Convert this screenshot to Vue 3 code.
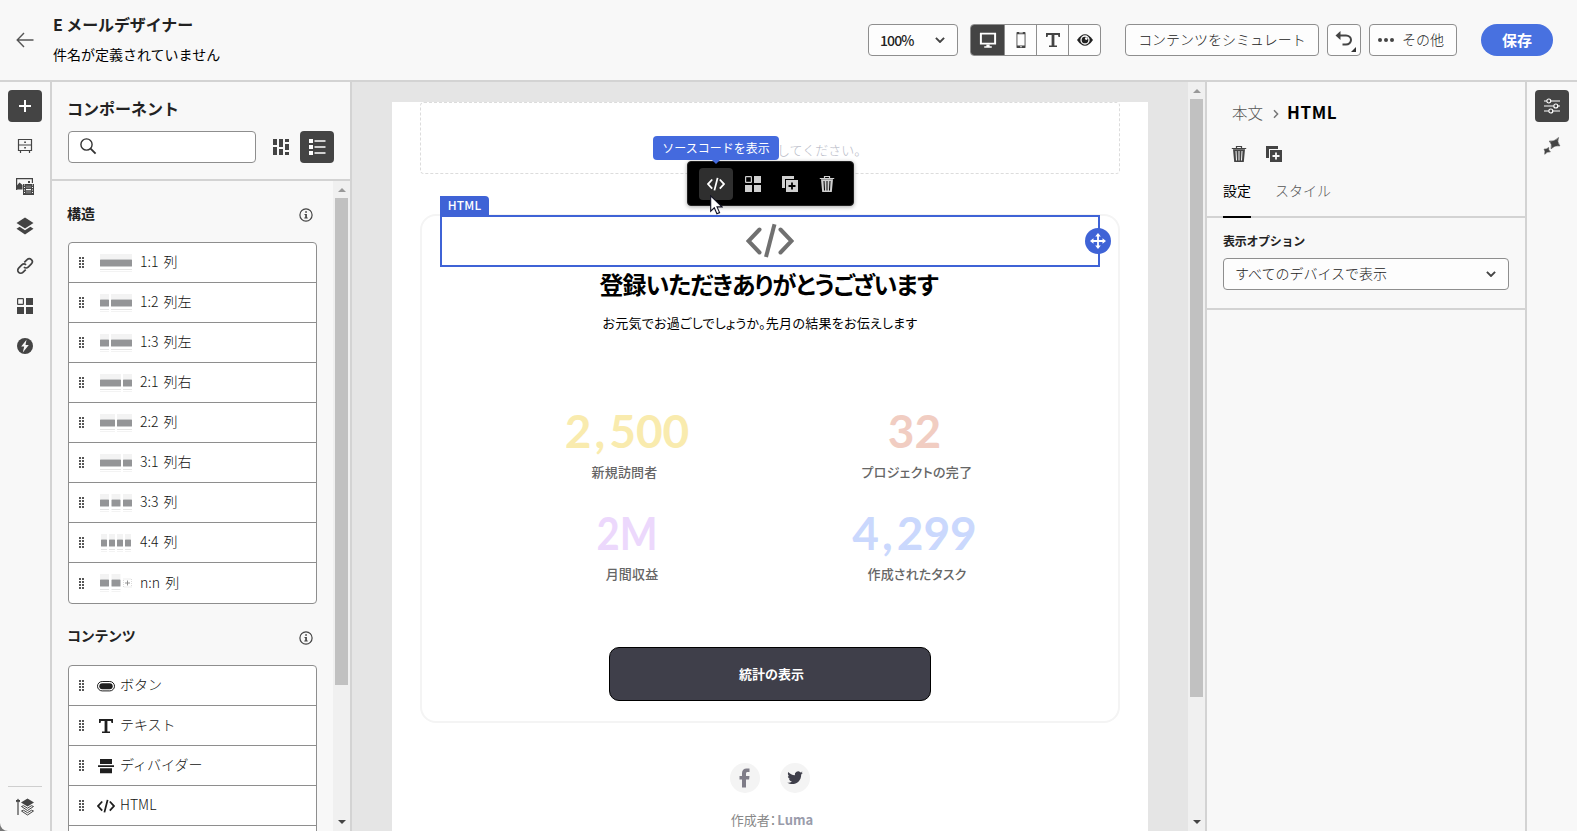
<script setup>
const structures = [
  { label: '1:1 列', bars: [[0, 32]] },
  { label: '1:2 列左', bars: [[0, 9], [11, 21]] },
  { label: '1:3 列左', bars: [[0, 9], [11, 21]] },
  { label: '2:1 列右', bars: [[0, 21], [23, 9]] },
  { label: '2:2 列', bars: [[0, 15], [17, 15]] },
  { label: '3:1 列右', bars: [[0, 21], [23, 9]] },
  { label: '3:3 列', bars: [[0, 9], [11.5, 9], [23, 9]] },
  { label: '4:4 列', bars: [[1, 6], [9, 6], [17, 6], [25, 6]] },
  { label: 'n:n 列', bars: [[0, 9], [11.5, 9]], plus: true },
]
const contents = [
  { label: 'ボタン', icon: 'i-button' },
  { label: 'テキスト', icon: 'i-text' },
  { label: 'ディバイダー', icon: 'i-divider' },
  { label: 'HTML', icon: 'i-code' },
  { label: '', icon: '' },
]
const rail = ['i-cabinet', 'i-media', 'i-layers', 'i-link', 'i-grid', 'i-bolt']
const stats = [
  { head: '2', tail: '500', label: '新規訪問者', cls: 's1' },
  { head: '32', tail: '', label: 'プロジェクトの完了', cls: 's2' },
  { head: '2M', tail: '', label: '月間収益', cls: 's3' },
  { head: '4', tail: '299', label: '作成されたタスク', cls: 's4' },
]
</script>

<template>
  <div class="app">
    <svg class="defs" width="0" height="0">
      <symbol id="i-cabinet" viewBox="0 0 18 18">
        <path d="M2.5 2.5h13v11h-13zM2.5 8h13M4.5 14v2M13.500 14v2" fill="none" stroke="currentColor" stroke-width="1.2" />
        <path d="M8.200 4.500h1.700v1.600h-1.700zM8.200 10h1.700v1.600h-1.700z" fill="currentColor" />
      </symbol>
      <symbol id="i-media" viewBox="0 0 18 18">
        <path d="M.6 13V1.600h15.800V6" fill="none" stroke="currentColor" stroke-width="1.200" />
        <path d="M.5 12.500V9l3-3.500L6.500 8v4.500zM12 4h2v2h-2zM7 7h11v11H7z" fill="currentColor" />
        <path d="M9.800 8.500v2.700h5.400V8.500zM9.800 13v3.500h5.400V13z" fill="#f8f8f8" opacity=".25" />
        <path d="M8.500 7.500v10M16.500 7.500v10" stroke="#f8f8f8" stroke-width="1" stroke-dasharray="1 1.500" />
        <path d="M10 12.500h5" stroke="#f8f8f8" stroke-width="1" />
      </symbol>
      <symbol id="i-layers" viewBox="0 0 18 18">
        <path d="M9 .5 17.500 6 9 11.500.5 6zM3.600 9.700 9 13.200l5.400-3.500 3.100 2L9 17.500.5 11.700z" fill="currentColor" />
      </symbol>
      <symbol id="i-link" viewBox="0 0 18 18">
        <g fill="none" stroke="currentColor" stroke-width="1.700" transform="rotate(-45 9 9)">
          <path d="M7 12H3a3 3 0 0 1 0-6h4.500a3 3 0 0 1 3 3" />
          <path d="M11 6h4a3 3 0 0 1 0 6h-4.500a3 3 0 0 1-3-3" />
        </g>
      </symbol>
      <symbol id="i-grid" viewBox="0 0 18 18">
        <rect x="1.600" y="1.600" width="5.800" height="5.800" rx=".5" fill="none" stroke="currentColor" stroke-width="1.200" />
        <path d="M10 1h7v7h-7zM1 10h7v7H1zM10 10h7v7h-7z" fill="currentColor" />
      </symbol>
      <symbol id="i-bolt" viewBox="0 0 18 18">
        <circle cx="9" cy="9" r="8" fill="currentColor" />
        <path d="M10.500 2.800 5.200 9.500h3l-1.400 6 6-7.500H9.500z" fill="#f8f8f8" />
      </symbol>
      <symbol id="i-stack" viewBox="0 0 18 18">
        <path d="M2 3v14M.4 4 2 1.500 3.600 4M0 2.500h4" fill="none" stroke="currentColor" stroke-width="1.200" />
        <path d="M11.500.5 18 4.500 11.500 8.500 5 4.500z" fill="currentColor" />
        <path d="m5.500 8.500 2-.8 4 2.500 4-2.500 2 .8-6 4zM5.500 13l2-.8 4 2.500 4-2.500 2 .8-6 4z" fill="none" stroke="currentColor" stroke-width="1" />
      </symbol>
      <symbol id="i-text" viewBox="0 0 18 18">
        <path d="M2 2h14v4h-1.500L14 4h-3.600v10.500H13V16H5v-1.500h2.600V4H4l-.5 2H2z" fill="currentColor" />
      </symbol>
      <symbol id="i-button" viewBox="0 0 18 18">
        <rect x=".5" y="4.500" width="17" height="9.400" rx="4.700" fill="none" stroke="currentColor" />
        <rect x="2.300" y="6.200" width="13.400" height="6" rx="3" fill="currentColor" />
      </symbol>
      <symbol id="i-divider" viewBox="0 0 18 18">
        <path d="M3 2h12v5H3zM1 8.200h16v1.800H1zM3 11.200h12v5H3z" fill="currentColor" />
      </symbol>
      <symbol id="i-code" viewBox="0 0 18 18">
        <path d="M5.200 4.500 1 9.100l4.200 4.600M12.800 4.500 17 9.100l-4.200 4.600M10.600 2.900 7.400 15.400" fill="none" stroke="currentColor" stroke-width="1.800" />
      </symbol>
      <symbol id="i-copy" viewBox="0 0 18 18">
        <path d="M1 1h12v3H4v9H1zM5 5h12v12H5z" fill="currentColor" />
        <path class="cut" d="M11 7.500v7M7.500 11h7" stroke-width="1.800" />
      </symbol>
      <symbol id="i-trash" viewBox="0 0 18 18">
        <path d="M6.500 3V1.500h5V3M1.800 3.500h14.400" fill="none" stroke="currentColor" stroke-width="1.200" />
        <path d="M3 4.200h12L13.800 17H4.200z" fill="currentColor" />
        <path class="cut" d="m6 6 .5 9.500M9 6v9.500M12 6l-.5 9.500" stroke-width="1" />
      </symbol>
      <symbol id="i-chev" viewBox="0 0 10 6">
        <path d="M.9.900 5 5 9.100.9" fill="none" stroke="currentColor" stroke-width="1.900" />
      </symbol>
    </svg>

    <header class="header">
      <svg class="back" viewBox="0 0 18 16"><path d="M17.500 8H1.500M8 1 1.200 8 8 15" fill="none" stroke="#555" stroke-width="1.400" /></svg>
      <div class="titles">
        <h1>E メールデザイナー</h1>
        <p>件名が定義されていません</p>
      </div>
      <button class="box zoom"><span>100%</span><svg class="chev"><use href="#i-chev" /></svg></button>
      <div class="group">
        <button class="on"><svg viewBox="0 0 20 18"><path d="M1 1h18v13H1zM3.200 3v9h13.600V3z" fill="#fff" fill-rule="evenodd" /><path d="M8.200 14h3.600v2h2.400v1.600H5.800V16h2.400z" fill="#fff" /></svg></button>
        <button><svg viewBox="0 0 20 18"><path d="M6 0h8q1 0 1 1v16q0 1-1 1H6q-1 0-1-1V1q0-1 1-1zM6 2.500v12.500h8V2.500z" fill="#444" fill-rule="evenodd" /><path d="M8 1h4M9 16.500h2" stroke="#fff" /></svg></button>
        <button><svg viewBox="0 0 18 18"><use href="#i-text" /></svg></button>
        <button><svg viewBox="0 0 18 18"><path d="M1 9q8-11.500 16 0-8 11.500-16 0z" fill="#222" /><circle cx="9" cy="9" r="4" fill="none" stroke="#fff" stroke-width="1.300" /><circle cx="10.300" cy="7.600" r="1.300" fill="#fff" /></svg></button>
      </div>
      <button class="box sim">コンテンツをシミュレート</button>
      <button class="box undo">
        <svg viewBox="0 0 34 32"><path d="M11 11.500h8a5 4.500 0 0 1 0 9h-3.500" fill="none" stroke="#444" stroke-width="2" /><path d="M13.500 7v9L8.500 11.500z" fill="#444" /><path d="M29 23v5h-5z" fill="#333" /></svg>
      </button>
      <button class="box more"><i></i><i></i><i></i><span>その他</span></button>
      <button class="save">保存</button>
    </header>

    <div class="body">
      <nav class="rail">
        <div class="sq"><svg viewBox="0 0 18 18"><path d="M9 3v12M3 9h12" stroke="#fff" stroke-width="2" /></svg></div>
        <svg v-for="r in rail" :key="r" class="ri"><use :href="'#' + r" /></svg>
        <div class="railend"><svg class="ri"><use href="#i-stack" /></svg></div>
      </nav>

      <aside class="panel">
        <div class="phead">
          <h2>コンポーネント</h2>
          <div class="prow">
            <div class="search"><svg viewBox="0 0 18 18"><circle cx="7.500" cy="7.500" r="5.600" fill="none" stroke="#333" stroke-width="1.400" /><path d="m11.600 11.600 5 5" stroke="#333" stroke-width="1.800" /></svg></div>
            <svg class="mason" viewBox="0 0 16 16"><path d="M0 0h4v6H0zM0 8h4v8H0zM6 0h4v8H6zM6 10h4v6H6zM12 0h4v3h-4zM12 5h4v6h-4zM12 13h4v3h-4z" fill="#444" /></svg>
            <div class="sq"><svg viewBox="0 0 18 18"><path d="M1 1h4v4H1zM1 7h4v4H1zM1 13h4v4H1zM6.500 2.200h11v1.600h-11zM6.500 8.200h11v1.600h-11zM6.500 14.200h11v1.600h-11z" fill="#fff" /></svg></div>
          </div>
        </div>
        <div class="pbody">
          <div class="plist">
            <div class="sec"><h3>構造</h3><svg class="info" viewBox="0 0 14 14"><circle cx="7" cy="7" r="6.100" fill="none" stroke="#444" stroke-width="1.200" /><path d="M6.200 3.200h1.700v1.500H6.200zM5.500 6h2.400v3.500h.8v1H5.300v-1h.9V7h-.7z" fill="#444" /></svg></div>
            <ul class="list">
              <li v-for="s in structures" :key="s.label">
                <svg class="grip" viewBox="0 0 5 11"><path d="M1 0v11M4 0v11" stroke="#444" stroke-width="1.800" stroke-dasharray="2 1" /></svg>
                <svg class="thumb" viewBox="0 0 32 20">
                  <g v-for="(b, i) in s.bars" :key="i">
                    <rect :x="b[0]" y="1" :width="b[1]" height="5" fill="#f3f3f3" />
                    <rect :x="b[0]" y="6.500" :width="b[1]" height="7" rx=".5" fill="#949597" />
                    <rect :x="b[0]" y="16" :width="b[1]" height="1" fill="#e4e4e4" />
                    <rect :x="b[0]" y="18" :width="b[1]" height="1" fill="#f3f3f3" />
                  </g>
                  <g v-if="s.plus">
                    <rect x="23.500" y="6" width="8" height="8" fill="none" stroke="#ccc" stroke-width=".7" stroke-dasharray="1 1" />
                    <path d="M27.500 7.500v5M25 10h5" stroke="#888" stroke-width=".9" />
                  </g>
                </svg>
                <span>{{ s.label }}</span>
              </li>
            </ul>
            <div class="sec second"><h3>コンテンツ</h3><svg class="info" viewBox="0 0 14 14"><circle cx="7" cy="7" r="6.100" fill="none" stroke="#444" stroke-width="1.200" /><path d="M6.200 3.200h1.700v1.500H6.200zM5.500 6h2.400v3.500h.8v1H5.300v-1h.9V7h-.7z" fill="#444" /></svg></div>
            <ul class="list">
              <li v-for="c in contents" :key="c.icon">
                <svg class="grip" viewBox="0 0 5 11"><path d="M1 0v11M4 0v11" stroke="#444" stroke-width="1.800" stroke-dasharray="2 1" /></svg>
                <svg class="ci"><use :href="'#' + c.icon" /></svg>
                <span>{{ c.label }}</span>
              </li>
            </ul>
          </div>
          <div class="sb"><b class="up"></b><b class="thumbbar t1"></b><b class="down"></b></div>
        </div>
      </aside>

      <main class="canvas">
        <div class="page">
          <div class="drop">してください。</div>
          <section class="card">
            <div class="sel">
              <span class="tag">HTML</span>
              <svg class="big" viewBox="0 0 48 36"><path d="M13.500 6.500 2.500 18l11 11.500M34.500 6.500l11 11.500-11 11.500" fill="none" stroke="#707070" stroke-width="4" stroke-linecap="round" /><path d="M28.500 1.200 20 34" stroke="#707070" stroke-width="4" /></svg>
              <span class="move"><svg viewBox="0 0 26 26"><path d="M13 7v12M7 13h12" stroke="#fff" stroke-width="1.800" /><path d="m13 5 2.800 3.500h-5.600zM13 21l2.800-3.500h-5.600zM5 13l3.500-2.800v5.600zM21 13l-3.500-2.800v5.600z" fill="#fff" /></svg></span>
              <div class="tools">
                <span class="tool act"><svg><use href="#i-code" /></svg></span>
                <span class="tool"><svg><use href="#i-grid" /></svg></span>
                <span class="tool"><svg><use href="#i-copy" /></svg></span>
                <span class="tool"><svg><use href="#i-trash" /></svg></span>
              </div>
              <div class="tip">ソースコードを表示</div>
              <svg class="cursor" viewBox="0 0 13 20"><path d="M.7.900v15.300l3.600-3.400 2.600 6 2.700-1.200-2.600-5.700h5z" fill="#fff" stroke="#112" stroke-width="1.100" /></svg>
            </div>
            <h2 class="thanks">登録いただきありがとうございます</h2>
            <p class="lead">お元気でお過ごしでしょうか。先月の結果をお伝えします</p>
            <div class="stats">
              <div v-for="s in stats" :key="s.label" class="stat" :class="s.cls">
                <div class="num">{{ s.head }}<span v-if="s.tail" class="comma">,</span>{{ s.tail }}</div>
                <div class="lbl">{{ s.label }}</div>
              </div>
            </div>
            <button class="cta">統計の表示</button>
          </section>
          <div class="social">
            <span><svg viewBox="0 0 30 30"><path d="M19.500 5.500v3.600h-1.800c-1.300 0-1.700.6-1.700 1.700V13h3.500l-.4 3.500H16V24.500h-4v-8H9.500V13H12v-2.800c0-3 1.800-4.700 4.600-4.700z" fill="#7f7d88" /></svg></span>
            <span><svg viewBox="0 0 30 30"><path d="M22.800 9.800c-.6.300-1.200.4-1.800.5.700-.4 1.100-1 1.400-1.700-.6.400-1.300.6-2 .8a3.200 3.200 0 0 0-5.500 2.900c-2.700-.1-5-1.400-6.600-3.300-.8 1.500-.4 3.300 1 4.300-.5 0-1-.2-1.400-.4 0 1.600 1.100 2.900 2.500 3.200-.5.100-.9.100-1.400.1.400 1.200 1.600 2.100 3 2.200a6.400 6.400 0 0 1-4.700 1.300c5.500 3.400 13.900.6 13.900-8.200.6-.5 1.200-1 1.600-1.700z" fill="#3f3f4a" /></svg></span>
          </div>
          <div class="by"><span>作成者：</span><b>Luma</b></div>
        </div>
        <div class="sb"><b class="up"></b><b class="thumbbar t2"></b><b class="down"></b></div>
      </main>

      <aside class="props">
        <div class="top">
          <div class="crumb"><span>本文</span><svg viewBox="0 0 6 10"><path d="M1 1.200 4.600 5 1 8.800" fill="none" stroke="#777" stroke-width="1.500" /></svg><b>HTML</b></div>
          <div class="acts"><svg><use href="#i-trash" /></svg><svg><use href="#i-copy" /></svg></div>
          <div class="tabs"><span class="cur">設定</span><span>スタイル</span></div>
        </div>
        <div class="form">
          <label>表示オプション</label>
          <div class="box select"><span>すべてのデバイスで表示</span><svg class="chev"><use href="#i-chev" /></svg></div>
        </div>
      </aside>
      <nav class="rail right">
        <div class="sq"><svg viewBox="0 0 18 18"><g fill="none" stroke="#fff" stroke-width="1.200"><path d="M1 4h2.500M8 4h9M1 9h9.500M15 9h2M1 14h4.500M10 14h7" /><circle cx="5.800" cy="4" r="2" /><circle cx="12.800" cy="9" r="2" /><circle cx="7.800" cy="14" r="2" /></g></svg></div>
        <svg class="ri" viewBox="0 0 18 18"><path d="M15.600.5Q13.600 4.600 16.900 8.900 12 7.700 8 11.800 9.500 7.200 6.200 4 11 5.200 15.600.5zM5.700 10.400Q5 12.800 7.400 14.900 4.300 14.400 1.700 17.300 2.700 14.300 1 12.100 3.600 12.500 5.700 10.400z" fill="#444" stroke="#444" stroke-width=".5" /></svg>
      </nav>
    </div>
  </div>
</template>

<style>
body { background: #777; overflow: hidden; }
</style>

<style scoped>
* { box-sizing: border-box; margin: 0; padding: 0; }
.app { width: 1577px; height: 831px; overflow: hidden; background: #f8f8f8; color: #222; display: flex; flex-direction: column; border-bottom-left-radius: 8px; font: 14px/20px "Noto Sans CJK JP", "Noto Sans", sans-serif; white-space: nowrap; }
.defs { position: absolute; }
svg { display: block; flex: none; }
button { font: inherit; color: inherit; border: 0; background: none; }
.cut { stroke: var(--cut, #f8f8f8); }
.header { height: 82px; border-bottom: 2px solid #d3d3d3; display: flex; align-items: center; flex: none; }
.back { width: 18px; height: 16px; margin-left: 16px; }
.titles { margin-left: 19px; width: 815px; }
h1 { font-size: 16px; line-height: 24px; font-weight: 700; color: #222; margin-top: -4px; letter-spacing: -0.1px; }
.titles p { color: #000; line-height: 20px; margin-top: 8px; font-weight: 400; }
.box { border: 1px solid #8e8e8e; border-radius: 4px; background: #fdfdfd; height: 32px; display: flex; align-items: center; }
.zoom { width: 90px; justify-content: space-between; padding: 0 12px 0 11px; }
.zoom span { line-height: 28px; letter-spacing: -0.9px; font-weight: 500; font-size: 14px; margin-bottom: 1px; }
.chev { width: 10px; height: 6px; color: #444; }
.group { margin-left: 12px; display: flex; height: 32px; width: 131px; border: 1px solid #8e8e8e; border-radius: 4px; background: #fdfdfd; overflow: hidden; }
.group button { flex: 1; display: flex; align-items: center; justify-content: center; border-left: 1px solid #8e8e8e; }
.group button:first-child { border-left: 0; }
.group button.on { background: #444; flex: 0 0 33px; }
.group svg { width: 18px; height: 18px; color: #444; }
.sim { margin-left: 24px; width: 194px; justify-content: center; font-weight: 300; padding-bottom: 2px; }
.undo { margin-left: 8px; width: 34px; }
.undo svg { width: 34px; height: 32px; margin: -1px; }
.more { margin-left: 8px; width: 88px; padding-left: 8px; font-weight: 300; }
.more i { width: 4px; height: 4px; border-radius: 50%; background: #444; margin-right: 2px; }
.more span { margin: 0 0 2px 6px; }
.save { margin-left: 24px; width: 72px; height: 32px; border-radius: 16px; background: #4871e0; color: #fff; font-weight: 700; font-size: 15px; line-height: 30px; }
.body { flex: 1; display: flex; min-height: 0; }
.rail { width: 52px; border-right: 2px solid #d3d3d3; display: flex; flex-direction: column; align-items: center; padding-top: 8px; color: #444; flex: none; }
.sq { width: 34px; height: 32px; border-radius: 4px; background: #444; display: flex; align-items: center; justify-content: center; flex: none; }
.sq svg { width: 18px; height: 18px; }
.ri { width: 18px; height: 18px; margin-bottom: 22px; }
.sq + .ri { margin-top: 15px; }
.railend { margin-top: auto; width: 34px; border-top: 1px solid #cfcfcf; height: 45px; padding: 11px 8px; }
.right { width: 50px; border: 0; }
.panel { width: 300px; border-right: 2px solid #d3d3d3; display: flex; flex-direction: column; flex: none; }
.phead { height: 99px; border-bottom: 2px solid #d3d3d3; padding: 14px 16px 0; flex: none; }
h2 { font-size: 16px; line-height: 24px; }
.phead h2 { margin-left: -1px; }
.prow { display: flex; align-items: center; margin-top: 11px; }
.search { width: 188px; height: 32px; border: 1px solid #8e8e8e; border-radius: 4px; background: #fff; padding: 5px 10px; }
.search svg { width: 18px; height: 18px; }
.mason { width: 16px; height: 16px; margin: 0 11px 0 17px; }
.pbody { flex: 1; display: flex; min-height: 0; }
.plist { width: 281px; padding: 0 16px; overflow: hidden; }
.sb { width: 17px; background: #f0f0f0; display: flex; flex-direction: column; align-items: center; flex: none; }
.sb .up { border: 4px solid transparent; border-top: 0; border-bottom-color: #999; margin-top: 7px; }
.sb .down { border: 4px solid transparent; border-bottom: 0; border-top-color: #444; margin-top: auto; margin-bottom: 7px; }
.thumbbar { width: 13px; background: #c1c1c1; margin-top: 6px; }
.t1 { height: 487px; }
.t2 { height: 598px; }
.sec { display: flex; justify-content: space-between; align-items: center; height: 61px; padding: 6px 4px 0 0; }
.sec.second { height: 61px; padding-top: 6px; }
h3 { font-size: 14px; line-height: 20px; margin: -4px 0 0 -1px; }
.second h3 { margin-top: -5px; letter-spacing: -0.3px; }
.info { width: 14px; height: 14px; }
.list { list-style: none; border: 1px solid #8e8e8e; border-radius: 4px; background: #fff; width: 249px; overflow: hidden; }
.list li { height: 40px; border-bottom: 1px solid #8e8e8e; display: flex; align-items: center; padding-left: 10px; }
.list li:last-child { border-bottom: 0; }
.list span { font-weight: 300; color: #111; word-spacing: 2px; margin-bottom: 3px; }
.grip { width: 5px; height: 11px; }
.thumb { width: 32px; height: 20px; margin: 0 8px 0 16px; }
.ci { width: 18px; height: 18px; margin: 0 5px 0 13px; color: #1f1f1f; }
.canvas { width: 855px; background: #e5e5e5; display: flex; justify-content: space-between; border-right: 2px solid #d3d3d3; flex: none; }
.page { width: 756px; margin: 20px 0 0 40px; background: #fff; padding: 0 28px; height: 729px; }
.drop { height: 72px; border: 1px dashed #dcdcdc; border-radius: 4px; padding: 37px 0 0 356px; color: #b9bcc8; font-weight: 300; font-size: 13px; line-height: 20px; }
.card { height: 509px; margin-top: 40px; border: 2px solid #f4f4f4; border-radius: 16px; display: flex; flex-direction: column; align-items: center; }
.sel { position: relative; width: 660px; height: 52px; margin-top: -1px; margin-left: 0; border: 2px solid #3f63d6; padding-top: 6px; }
.big { width: 48px; height: 36px; margin: 0 0 0 304px; }
.tag { position: absolute; left: -2px; top: -21px; height: 20px; width: 49px; background: #3f63d6; border-radius: 0 4px 0 0; color: #fff; font-size: 12px; font-weight: 500; line-height: 18px; text-align: center; letter-spacing: 0.2px; }
.move { position: absolute; right: -13px; top: 11px; width: 26px; height: 26px; border-radius: 50%; background: #3f63d6; }
.tools { position: absolute; left: 245px; top: -56px; width: 167px; height: 45px; background: #000; border: 1px solid #222; border-radius: 4px; display: flex; align-items: center; padding-left: 11px; gap: 3px; --cut: #000; box-shadow: 0 1px 4px #0005; }
.tool { width: 34px; height: 32px; border-radius: 4px; display: flex; align-items: center; justify-content: center; color: #d0d0d0; }
.tool svg { width: 18px; height: 18px; }
.tool.act { background: #2f2f2f; color: #fff; }
.tip { position: absolute; left: 211px; top: -81px; width: 126px; height: 24px; border-radius: 4px; background: #446ade; color: #fff; font-size: 12px; line-height: 23px; text-align: center; }
.tip::after { content: ""; position: absolute; left: 59px; top: 24px; border: 4px solid transparent; border-top-color: #446ade; border-bottom: 0; }
.cursor { position: absolute; left: 268px; top: -22px; width: 13px; height: 20px; }
.thanks { font-size: 24px; line-height: 32px; color: #000; font-feature-settings: "palt"; letter-spacing: -1px; margin: 1px 3px 0 0; }
.lead { font-size: 13px; line-height: 20px; color: #000; font-feature-settings: "palt"; letter-spacing: 0.26px; margin-top: 13px; margin-right: 20px; }
.stats { width: 100%; display: grid; grid-template-columns: 290px 290px; grid-template-rows: 102px 102px; margin-top: 71px; padding-left: 60px; }
.stat { display: flex; flex-direction: column; align-items: center; }
.num { font: 700 46px/54px Lato, sans-serif; }
.comma { margin: 0 4px 0 3px; }
.s2 .num { margin-left: -5px; }
.s3 .num { transform: scaleX(0.87); }
.s4 .num { margin-left: -5px; }
.lbl { font-size: 13px; line-height: 20px; color: #666; font-weight: 500; margin-top: 4px; font-feature-settings: "palt"; letter-spacing: 0.15px; }
.s1 .lbl { margin-left: -5px; }
.s3 .lbl { margin-left: 10px; }
.s2 .lbl { letter-spacing: 0.3px; }
.s1 { color: #f9ebae; }
.s2 { color: #f1cdc2; }
.s3 { color: #ecd8fc; }
.s4 { color: #cad8fd; }
.cta { width: 322px; height: 54px; border: 1px solid #000; border-radius: 10px; background: #3f3f4a; color: #fff; font-weight: 700; font-size: 13px; margin-top: 39px; line-height: 48px; padding-right: 0; text-indent: 3px; }
.social { display: flex; justify-content: center; gap: 20px; margin-top: 40px; }
.social span { width: 30px; height: 30px; border-radius: 50%; background: #f4f4f4; }
.by { margin-top: 17px; padding-left: 4px; text-align: center; font-size: 13px; line-height: 20px; color: #888; font-feature-settings: "palt"; }
.by b { color: #9a9cab; margin-left: 1px; }
.props { width: 320px; border-right: 2px solid #d3d3d3; flex: none; }
.top { height: 136px; border-bottom: 2px solid #d3d3d3; padding: 0 16px; }
.crumb { display: flex; align-items: center; padding: 17px 0 0 9px; height: 43px; font-size: 15.500px; font-weight: 300; color: #555; }
.crumb svg { width: 6px; height: 10px; margin: 4px 8px 0 10px; }
.crumb b { font-size: 17px; color: #000; letter-spacing: 0.6px; font-weight: 700; }
.acts { display: flex; gap: 17px; padding: 20px 0 0 7px; color: #444; }
.acts svg { width: 18px; height: 18px; }
.tabs { display: flex; gap: 24px; margin-top: 17px; height: 38px; font-weight: 300; color: #555; }
.tabs .cur { color: #000; border-bottom: 2px solid #000; font-weight: 400; }
.form { height: 92px; border-bottom: 2px solid #d3d3d3; padding: 14px 16px 0; }
.form label { display: block; font-size: 12px; line-height: 18px; font-weight: 700; letter-spacing: -0.3px; }
.select { width: 286px; margin-top: 8px; padding: 0 12px 0 11px; justify-content: space-between; font-weight: 300; }
.select span { margin-bottom: 2px; }
</style>
